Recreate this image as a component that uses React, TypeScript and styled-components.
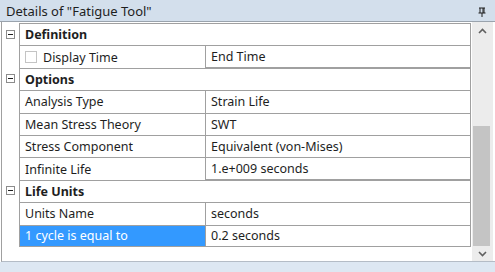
import styled, { createGlobalStyle } from "styled-components";

const GlobalStyle = createGlobalStyle`
  html, body {
    margin: 0;
    padding: 0;
    background: #ffffff;
  }
  body {
    font-family: "Noto Sans", "Open Sans", sans-serif;
  }
`;

type Item = { name: string; value: string; check?: boolean; selected?: boolean };
type Group = { title: string; items: Item[] };

const groups: Group[] = [
  {
    title: "Definition",
    items: [{ name: "Display Time", value: "End Time", check: true }],
  },
  {
    title: "Options",
    items: [
      { name: "Analysis Type", value: "Strain Life" },
      { name: "Mean Stress Theory", value: "SWT" },
      { name: "Stress Component", value: "Equivalent (von-Mises)" },
      { name: "Infinite Life", value: "1.e+009 seconds" },
    ],
  },
  {
    title: "Life Units",
    items: [
      { name: "Units Name", value: "seconds" },
      { name: "1 cycle is equal to", value: "0.2 seconds", selected: true },
    ],
  },
];

const App = () => {
  return (
    <Panel>
      <GlobalStyle />
      <TitleBar>
        <span>Details of "Fatigue Tool"</span>
        <svg width="8" height="10" viewBox="0 0 8 10">
          <path d="M1 1h6M2 1v5M5 1v5M6 1v5M0.5 6h7M4 6v4" stroke="#1e1e1e" strokeWidth="1" fill="none" />
        </svg>
      </TitleBar>
      <Body>
        <Grid>
          {groups.map((g) => (
            <div key={g.title}>
              <Row>
                <Gutter>
                  <Toggle />
                </Gutter>
                <GroupCell>{g.title}</GroupCell>
              </Row>
              {g.items.map((it) => (
                <Row key={it.name}>
                  <Gutter />
                  <NameCell $selected={it.selected}>
                    {it.check && <Check />}
                    {it.name}
                  </NameCell>
                  <ValueCell>{it.value}</ValueCell>
                </Row>
              ))}
            </div>
          ))}
        </Grid>
        <ScrollBar>
          <Arrow $h={18}>
            <svg width="9" height="6" viewBox="0 0 9 6">
              <path d="M1 5L4.5 1.5L8 5" stroke="#606060" strokeWidth="1.6" fill="none" />
            </svg>
          </Arrow>
          <Track>
            <Thumb />
          </Track>
          <Arrow $h={15}>
            <svg width="9" height="6" viewBox="0 0 9 6">
              <path d="M1 1L4.5 4.5L8 1" stroke="#606060" strokeWidth="1.6" fill="none" />
            </svg>
          </Arrow>
        </ScrollBar>
      </Body>
      <StatusStrip />
    </Panel>
  );
};

export default App;

const Panel = styled.div`
  width: 495px;
  height: 272px;
  display: flex;
  flex-direction: column;
  overflow: hidden;
  background: #ffffff;
`;

const TitleBar = styled.div`
  height: 22px;
  box-sizing: border-box;
  background: #d3dfec;
  border-bottom: 1px solid #9aa3ad;
  display: flex;
  align-items: center;
  justify-content: space-between;
  padding: 0 9px 0 6px;
  font-size: 13px;
  color: #1e1e1e;
  svg {
    margin-top: 3px;
  }
`;

const Body = styled.div`
  height: 240px;
  display: flex;
  margin-left: 1px;
  border-left: 1px solid #a0a0a0;
  border-bottom: 1px solid #b4bcc6;
  box-sizing: border-box;
`;

const Grid = styled.div`
  width: 469px;
  padding-top: 1px;
`;

const Row = styled.div`
  display: grid;
  grid-template-columns: 17px 186px 1fr;
  height: 22.4px;
  font-size: 12.5px;
  color: #1e1e1e;
`;

const Gutter = styled.div`
  display: flex;
  align-items: center;
  padding-left: 4px;
`;

const Toggle = styled.div`
  width: 9px;
  height: 9px;
  box-sizing: border-box;
  border: 1px solid #8c8c8c;
  position: relative;
  &::after {
    content: "";
    position: absolute;
    left: 1px;
    right: 1px;
    top: 3px;
    height: 1px;
    background: #1e1e1e;
  }
`;

const Cell = styled.div`
  display: flex;
  align-items: center;
  box-sizing: border-box;
  border-left: 1px solid #a0a0a0;
  border-top: 1px solid #a0a0a0;
  padding-left: 5px;
  white-space: nowrap;
`;

const GroupCell = styled(Cell)`
  grid-column: 2 / 4;
  font-weight: bold;
  border-right: 1px solid #a0a0a0;
`;

const NameCell = styled(Cell)<{ $selected?: boolean }>`
  background: ${(p) => (p.$selected ? "#3399ff" : "#ffffff")};
  color: ${(p) => (p.$selected ? "#ffffff" : "#1e1e1e")};
  ${(p) => p.$selected && "border-bottom: 1px solid #a0a0a0;"}
`;

const ValueCell = styled(Cell)`
  border-right: 1px solid #a0a0a0;
  ${Row}:last-child > & {
    border-bottom: 1px solid #a0a0a0;
  }
`;

const Check = styled.span`
  width: 12px;
  height: 12px;
  box-sizing: border-box;
  border: 1px solid #c4c4c4;
  margin-right: 6px;
  background: #ffffff;
`;

const ScrollBar = styled.div`
  width: 21px;
  display: flex;
  flex-direction: column;
  background: #ececec;
  margin: 0 2px 0 1px;
`;

const Arrow = styled.div<{ $h: number }>`
  height: ${(p) => p.$h}px;
  display: flex;
  align-items: center;
  justify-content: center;
`;

const Track = styled.div`
  flex: 1;
  display: flex;
  flex-direction: column;
  justify-content: flex-end;
  padding: 0 3px 0 1px;
`;

const Thumb = styled.div`
  height: 120px;
  background: #c4c4c4;
`;

const StatusStrip = styled.div`
  flex: 1;
  background: #dde7f2;
`;
